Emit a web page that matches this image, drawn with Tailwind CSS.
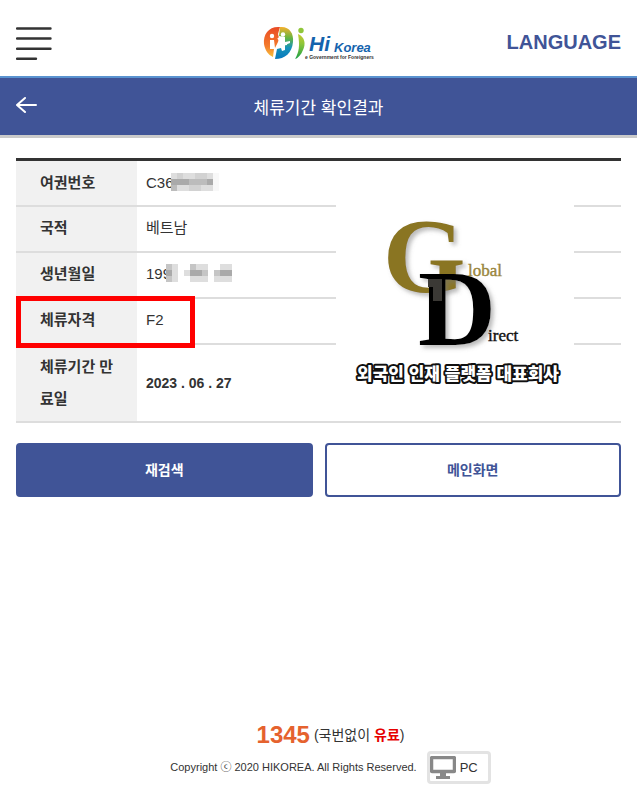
<!DOCTYPE html>
<html lang="ko">
<head>
<meta charset="utf-8">
<meta name="viewport" content="width=device-width, initial-scale=1">
<title>체류기간 확인결과</title>
<script src="https://cdn.jsdelivr.net/npm/@tailwindcss/browser@4"></script>
</head>
<body class="flex min-h-screen flex-col bg-white font-['Liberation_Sans','Noto_Sans_CJK_KR',sans-serif] text-[#333]">
<header class="grid h-[76px] grid-cols-[1fr_auto_1fr] items-center px-4 pt-2">
  <button type="button" aria-label="메뉴" class="justify-self-start pt-1">
    <svg class="block" width="36" height="34" viewBox="0 0 36 34" fill="none" stroke="#333" stroke-width="2.4" stroke-linecap="round"><path d="M1 1.500H34.500M1 11.500H34.500M1 21.700H34.500M1 31.700H20"/></svg>
  </button>
  <a href="#" aria-label="Hi Korea" class="pt-1">
    <svg class="block" width="112" height="38" viewBox="0 0 112 38">
      <defs>
        <linearGradient id="warm" x1="0" y1="0" x2="0" y2="1"><stop offset="0" stop-color="#e94b25"/><stop offset=".65" stop-color="#f47c2c"/><stop offset="1" stop-color="#f6c13c"/></linearGradient>
        <linearGradient id="cool" x1="0" y1="0" x2="0" y2="1"><stop offset="0" stop-color="#f7b02c"/><stop offset=".35" stop-color="#63b541"/><stop offset=".65" stop-color="#1693ba"/><stop offset="1" stop-color="#0878be"/></linearGradient>
        <linearGradient id="leaf" x1="0" y1="0" x2="0" y2="1"><stop offset="0" stop-color="#c5c92e"/><stop offset=".4" stop-color="#8cc63a"/><stop offset="1" stop-color="#1b9f47"/></linearGradient>
      </defs>
      <path d="M17 2C6 1 0 9 1 19c1 6 4 11 9 13l1-8H7v-9h4l1 8 3-6 1-4-1-4z" fill="url(#warm)"/>
      <circle cx="9" cy="11" r="2.200" fill="#fff"/>
      <path d="M17 2c9-1 14 6 13 15-1 11-8 17-18 17l2-10 4-1 1 3 3-1v-5l5-2v-2l-5 1v-5l-6-1z" fill="url(#cool)"/>
      <circle cx="20" cy="9.500" r="2.200" fill="#fff"/>
      <path d="M15 13l3 3-1 4 7-1" fill="none" stroke="#fff" stroke-width="2"/>
      <path d="M35 9c7 3 8 10 5 16-2 5-5 8-8 9 4-7 5-13 3-25z" fill="url(#leaf)"/>
      <circle cx="38" cy="5.500" r="2.700" fill="#8fc63a"/>
      <text x="46" y="26" font-family="Liberation Sans" font-size="21" font-weight="700" font-style="italic" fill="#1463ad">Hi</text>
      <text x="71" y="27" font-family="Liberation Sans" font-size="13" font-weight="700" font-style="italic" fill="#1463ad">Korea</text>
      <text x="42" y="34" font-family="Liberation Sans" font-size="5" font-weight="700" fill="#333">e Government for Foreigners</text>
    </svg>
  </a>
  <button type="button" class="justify-self-end text-xl font-bold text-[#405497]">LANGUAGE</button>
</header>

<div class="grid h-[62px] grid-cols-[1fr_auto_1fr] items-center border-t-2 border-b-3 border-t-[#5a93d0] border-b-[#cacaca] bg-[#405497] px-4">
  <a href="#" aria-label="뒤로" class="justify-self-start pb-1">
    <svg class="block" width="22" height="18" viewBox="0 0 22 18" fill="none" stroke="#fff" stroke-width="2" stroke-linecap="round" stroke-linejoin="round"><path d="M9 2L1 9l8 7M1 9h19"/></svg>
  </a>
  <h1 class="pt-1 text-[17px] text-white">체류기간 확인결과</h1>
</div>

<main class="px-4 pt-5">
  <div class="relative">
    <table class="w-full border-collapse border-t-3 border-[#333] text-left text-[15px]">
      <tbody>
        <tr class="h-[46px] border-b-2 border-[#ddd]">
          <th scope="row" class="w-[121px] bg-[#f1f1f1] pl-6">여권번호</th>
          <td class="pl-[9px]"><span class="relative">C36<svg class="absolute -top-px left-[25px]" width="48" height="18" viewBox="0 0 8 3" preserveAspectRatio="none" shape-rendering="crispEdges" aria-hidden="true"><path fill="#dedede" d="M0 0h7v3H0z"/><path fill="#f8f8f8" d="M7 0h1v3H7z"/><path fill="#aaa" d="M0 1h3v1H0zM6 1h1v1H6z"/><path fill="#bcbcbc" d="M3 1h3v1H3zM0 2h1v1H0z"/><path fill="#d2d2d2" d="M1 0h1v1H1zM4 0h2v1H4zM3 2h2v1H3z"/></svg></span></td>
        </tr>
        <tr class="h-[46px] border-b-2 border-[#ddd]">
          <th scope="row" class="bg-[#f1f1f1] pl-6">국적</th>
          <td class="pl-[9px]">베트남</td>
        </tr>
        <tr class="h-[46px] border-b-2 border-[#ddd]">
          <th scope="row" class="bg-[#f1f1f1] pl-6">생년월일</th>
          <td class="pl-[9px]"><span class="relative">199<svg class="absolute -top-px left-[20px]" width="66" height="18" viewBox="0 0 11 3" preserveAspectRatio="none" shape-rendering="crispEdges" aria-hidden="true"><path fill="#fff" d="M0 0h11v3H0z"/><path fill="#c5c5c5" d="M0 0h1v3H0zM4 0h1v1H4zM6 1h1v1H6zM8 1h1v1H8z"/><path fill="#dedede" d="M1 0h1v3H1zM3 1h1v1H3zM5 0h2v1H5zM4 2h3v1H4zM9 0h2v1H9zM8 2h3v1H8z"/><path fill="#aaa" d="M0 1h1v1H0zM4 1h2v1H4zM9 1h2v1H9z"/></svg></span></td>
        </tr>
        <tr class="h-[46px] border-b-2 border-[#ddd]">
          <th scope="row" class="bg-[#f1f1f1] pl-6">체류자격</th>
          <td class="pl-[9px]">F2</td>
        </tr>
        <tr class="h-[78px] border-b-2 border-[#ddd]">
          <th scope="row" class="bg-[#f1f1f1] pr-4 pl-6 leading-8">체류기간 만료일</th>
          <td class="pl-[9px] text-sm font-bold">2023 . 06 . 27</td>
        </tr>
      </tbody>
    </table>
    <div class="absolute top-[138px] left-0 h-[52px] w-[179px] border-5 border-[#f00]"></div>
    <svg class="absolute top-[35px] left-[320px] bg-white" width="238" height="208" viewBox="0 0 238 208" role="img" aria-label="Global Direct">
      <defs><filter id="shade" x="-20%" y="-20%" width="150%" height="150%"><feDropShadow dx="3" dy="3" stdDeviation="2" flood-color="#777" flood-opacity=".5"/></filter></defs>
      <text x="47" y="99" font-family="Liberation Serif" font-size="106" font-weight="700" fill="#8a7424" filter="url(#shade)">G</text>
      <text x="82" y="152" font-family="Liberation Serif" font-size="108" font-weight="700" fill="#000" filter="url(#shade)">D</text>
      <path d="M92 86h14v22H97V94h-5z" fill="#3b3935"/>
      <text x="132" y="83" font-family="Liberation Serif" font-size="17" fill="#9a863d" stroke="#9a863d" stroke-width=".4">lobal</text>
      <text x="152" y="148" font-family="Liberation Serif" font-size="17" fill="#111" stroke="#111" stroke-width=".4">irect</text>
      <text x="122" y="187" text-anchor="middle" font-family="Noto Sans CJK KR" font-size="17" font-weight="900" fill="#fff" stroke="#111" stroke-width="4" stroke-linejoin="round" paint-order="stroke">외국인 인재 플랫폼 대표회사</text>
    </svg>
  </div>
  <div class="mt-5 grid grid-cols-2 gap-3 text-sm font-bold">
    <button type="button" class="h-[54px] rounded border-2 border-[#405497] bg-[#405497] text-white">재검색</button>
    <button type="button" class="h-[54px] rounded border-2 border-[#405497] bg-white text-[#405497]">메인화면</button>
  </div>
</main>

<footer class="mt-auto flex flex-col items-center pb-[10px] pl-6">
  <p class="flex items-center gap-1 text-sm"><strong class="text-2xl text-[#e5622e]">1345</strong><span>(국번없이 <strong class="text-[#e60000]">유료</strong>)</span></p>
  <div class="flex items-center gap-[10px] text-[11px]">
    <p>Copyright ⓒ 2020 HIKOREA. All Rights Reserved.</p>
    <button type="button" class="flex h-[33px] w-16 items-center gap-1 rounded border-3 border-[#e3e3e3] text-[13px]">
      <svg width="26" height="23" viewBox="0 0 26 23" aria-hidden="true"><rect x="1.500" y="1.500" width="23" height="14" rx="1" fill="#fff" stroke="#888" stroke-width="3.500"/><path d="M10 16h6v4h4v3H6v-3h4z" fill="#888"/></svg>
      PC
    </button>
  </div>
</footer>
</body>
</html>
